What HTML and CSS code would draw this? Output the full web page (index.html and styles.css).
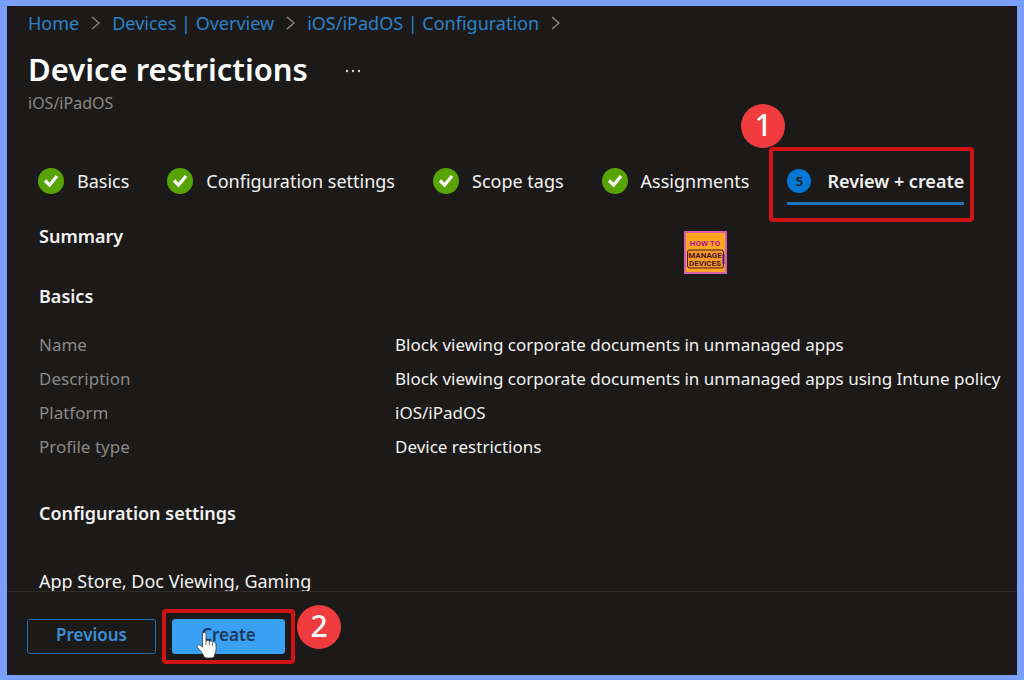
FILE: index.html
```html
<!DOCTYPE html>
<html lang="en">
<head>
    <title>Device restrictions</title>
    <meta charset="UTF-8">
    <meta name="viewport" content="width=device-width, initial-scale=1">
    <link rel="stylesheet" href="styles.css">
</head>
<body>
    <svg class="defs" width="0" height="0">
        <symbol id="check" viewBox="0 0 26 26">
            <circle cx="13" cy="13" r="13" fill="#57a300"/>
            <path d="M7 12.500l4.600 4.600 7.400-9.100" fill="none" stroke="#fff" stroke-width="3.200"/>
        </symbol>
        <symbol id="chevron" viewBox="0 0 9 14">
            <path d="M1 1l7 6-7 6" fill="none" stroke="#8a8886" stroke-width="1.400"/>
        </symbol>
    </svg>

    <header class="header">
        <nav class="breadcrumb">
            <a href="#">Home</a>
            <svg class="chevron"><use href="#chevron"/></svg>
            <a href="#">Devices | Overview</a>
            <svg class="chevron"><use href="#chevron"/></svg>
            <a href="#">iOS/iPadOS | Configuration</a>
            <svg class="chevron"><use href="#chevron"/></svg>
        </nav>
        <div class="title-row">
            <h1>Device restrictions</h1>
            <button class="more" aria-label="More">
                <svg width="18" height="4" viewBox="0 0 18 4" fill="#d2d0ce"><circle cx="3" cy="2" r="1.200"/><circle cx="9" cy="2" r="1.200"/><circle cx="15" cy="2" r="1.200"/></svg>
            </button>
        </div>
        <p class="subtitle">iOS/iPadOS</p>
    </header>

    <nav class="steps">
        <a class="step" href="#"><svg class="check"><use href="#check"/></svg>Basics</a>
        <a class="step" href="#"><svg class="check"><use href="#check"/></svg>Configuration settings</a>
        <a class="step" href="#"><svg class="check"><use href="#check"/></svg>Scope tags</a>
        <a class="step" href="#"><svg class="check"><use href="#check"/></svg>Assignments</a>
        <a class="step active" href="#">
            <span class="num">5</span>Review + create
            <span class="mark mark-step"></span>
            <span class="badge badge-step">1</span>
        </a>
    </nav>

    <main class="content">
        <div class="summary-row">
            <h2>Summary</h2>
            <svg class="logo" viewBox="0 0 43 43">
                <rect x="1" y="1" width="41" height="41" fill="#ffa51f" stroke="#d65fb0" stroke-width="2"/>
                <text x="21" y="15" class="logo-top">HOW TO</text>
                <rect x="3.500" y="19" width="36" height="18" rx="2" fill="#f39a2c" stroke="#4a1526" stroke-width="1"/>
                <path d="M39.500 23v10" stroke="#5b1280" stroke-width="2"/>
                <text x="21" y="27" class="logo-text">MANAGE</text>
                <text x="21" y="35" class="logo-text">DEVICES</text>
            </svg>
        </div>

        <h2>Basics</h2>
        <dl class="details">
            <dt>Name</dt>
            <dd>Block viewing corporate documents in unmanaged apps</dd>
            <dt>Description</dt>
            <dd>Block viewing corporate documents in unmanaged apps using Intune policy</dd>
            <dt>Platform</dt>
            <dd>iOS/iPadOS</dd>
            <dt>Profile type</dt>
            <dd>Device restrictions</dd>
        </dl>

        <h2>Configuration settings</h2>
        <p class="category">App Store, Doc Viewing, Gaming</p>
    </main>

    <footer class="footer">
        <button class="btn">Previous</button>
        <div class="create">
            <button class="btn btn-primary">Create</button>
            <span class="mark mark-create"></span>
            <span class="badge badge-create">2</span>
            <svg class="cursor" viewBox="0 0 22 28">
                <path d="M6.500 3.500C6.500.8 10 .8 10 3.500V10c.8-1 2.900-.8 3.300.5.9-.9 2.800-.6 3.200.8 1-.7 3.500-.2 3.500 1.900V19c0 2.500-1.500 3.500-1.500 5 0 2-1.500 3-3.500 3h-4c-2 0-3-1-3.500-2.500C6.800 22 4 19.500 1.500 16.500c-1.300-1.700.7-3.500 2.700-2.200L6.500 16z" fill="#fff" stroke="#333" stroke-width=".8"/>
                <path d="M10 10v4M13.300 11v3.500M16.500 12v3" stroke="#555" stroke-width=".8"/>
            </svg>
        </div>
    </footer>
</body>
</html>
```
FILE: styles.css
```css
* {
    box-sizing: border-box;
}
body {
    margin: 0;
    height: 100vh;
    display: flex;
    flex-direction: column;
    overflow: hidden;
    border: solid #779ffb;
    border-width: 6px 7px 5px;
    background-color: #1b1a19;
    color: #f3f2f1;
    font-family: "Noto Sans", "Open Sans", sans-serif;
    font-size: 18px;
    line-height: 24px;
}
h1, h2, p, dl, dd {
    margin: 0;
}
a {
    color: #2b82c9;
    text-decoration: none;
}
button {
    font-family: inherit;
    cursor: pointer;
}
.defs {
    position: absolute;
}

/* header */
.header {
    padding: 5px 21px 0;
}
.breadcrumb {
    display: flex;
    align-items: center;
    gap: 12px;
}
.chevron {
    width: 9px;
    height: 14px;
}
.title-row {
    display: flex;
    align-items: center;
    gap: 36px;
    margin-top: 12px;
}
h1 {
    font-size: 31px;
    line-height: 44px;
    font-weight: 600;
    color: #fff;
}
.more {
    display: flex;
    padding: 4px 0 0;
    border: none;
    background: none;
}
.subtitle {
    font-size: 16px;
    color: #8a8886;
}

/* wizard steps */
.steps {
    display: flex;
    gap: 38px;
    padding: 50px 0 0 31px;
    white-space: nowrap;
}
.step {
    position: relative;
    display: flex;
    align-items: center;
    gap: 13px;
    height: 40px;
    padding-bottom: 8px;
    color: #f3f2f1;
}
.check {
    width: 26px;
    height: 26px;
}
.active {
    gap: 16px;
    padding-bottom: 5px;
    font-weight: 600;
    border-bottom: 3px solid #1f75b8;
}
.num {
    width: 24px;
    height: 24px;
    border-radius: 50%;
    background-color: #0078d4;
    color: #1b1a19;
    font-size: 13px;
    text-align: center;
}

/* red callouts */
.mark {
    position: absolute;
    border: 4px solid #d01414;
    border-radius: 4px;
    pointer-events: none;
}
.badge {
    position: absolute;
    width: 44px;
    height: 44px;
    border-radius: 50%;
    background-color: #f03c3f;
    color: #fff;
    font-size: 30px;
    font-weight: 500;
    line-height: 42px;
    text-align: center;
}
.mark-step {
    inset: -18px -10px -20px -18px;
}
.badge-step {
    left: -46px;
    top: -61px;
}
.mark-create {
    inset: -10px;
}
.badge-create {
    left: 125px;
    top: -14px;
}

/* summary */
.content {
    flex: 1;
    min-height: 0;
    overflow: hidden;
    padding: 19px 0 0 32px;
}
h2 {
    font-size: 18px;
    line-height: 24px;
    font-weight: 600;
}
.summary-row {
    display: flex;
    align-items: flex-start;
    height: 60px;
}
.summary-row h2 {
    width: 645px;
}
.logo {
    width: 43px;
    height: 43px;
    margin-top: 7px;
}
.logo text {
    font-family: Roboto, sans-serif;
    font-weight: bold;
    text-anchor: middle;
}
.logo-top {
    font-size: 8px;
    fill: #b3138f;
}
.logo-text {
    font-size: 8px;
    fill: #4a1526;
}
.details {
    display: grid;
    grid-template-columns: 356px 1fr;
    row-gap: 10px;
    margin: 25px 0 42px;
    font-size: 17px;
}
dt {
    color: #8a8886;
}
.category {
    margin-top: 44px;
}

/* footer */
.footer {
    display: flex;
    gap: 16px;
    height: 84px;
    padding: 27px 20px 0;
    border-top: 1px solid #2f2e2d;
}
.btn {
    width: 129px;
    height: 35px;
    padding: 0 0 4px;
    border: 1px solid #2a6ca8;
    border-radius: 3px;
    background: none;
    color: #3a8fd6;
    font-size: 17px;
    font-weight: 600;
}
.create {
    position: relative;
    height: 35px;
}
.btn-primary {
    width: 113px;
    border-color: #3aa0f3;
    background-color: #3aa0f3;
    color: #16385a;
}
.cursor {
    position: absolute;
    left: 24px;
    top: 12px;
    width: 22px;
    height: 28px;
}
```
